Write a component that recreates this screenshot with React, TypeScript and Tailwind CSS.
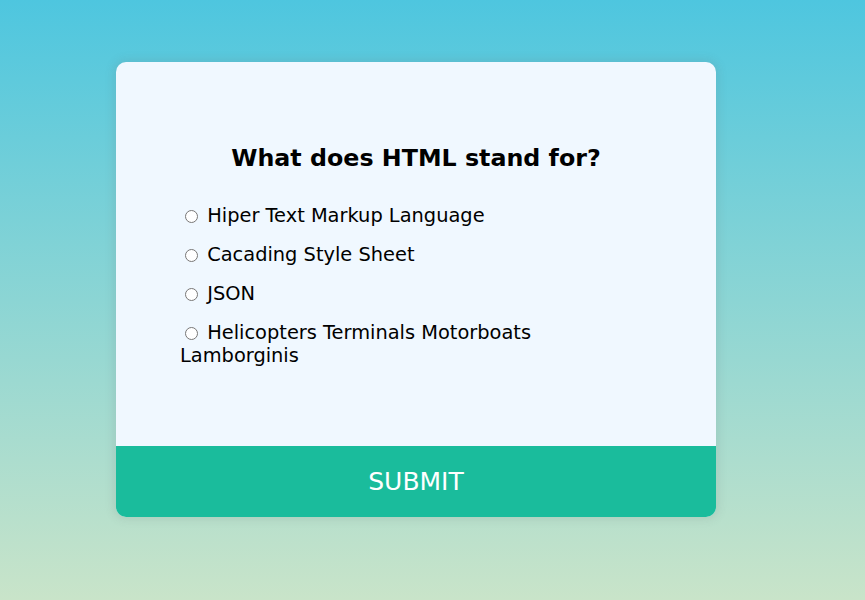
import React from "react";

const options = [
  "Hiper Text Markup Language",
  "Cacading Style Sheet",
  "JSON",
  "Helicopters Terminals Motorboats Lamborginis",
];

export default function App() {
  return (
    <div
      className="w-[865px] h-[600px] bg-[linear-gradient(to_bottom,#4ec6df,#c9e4c9)] pl-[116px] pt-[62px]"
      style={{ fontFamily: '"DejaVu Sans", sans-serif' }}
    >
      <div className="w-[600px] rounded-[10px] bg-[#f0f8ff] overflow-hidden shadow-[0_0_10px_2px_rgba(100,100,100,0.15)]">
        <div className="pt-16 px-16 pb-[63px]">
          <h2 className="pt-[18px] pb-4 px-4 text-center text-[23.75px] font-bold leading-[28px] text-black">
            What does HTML stand for?
          </h2>
          <ul className="list-none">
            {options.map((o, i) => (
              <li key={i} className="my-4 text-[19.4px] leading-[23px] text-black">
                <input
                  type="radio"
                  name="answer"
                  id={`a${i}`}
                  className="m-[3px_3px_0_5px] w-[13px] h-[13px] align-[-1px]"
                />{" "}
                <label htmlFor={`a${i}`}>{o}</label>
              </li>
            ))}
          </ul>
        </div>
        <button className="block w-full bg-[#1abc9c] text-white text-[25px] leading-[29px] py-[21px] text-center">
          SUBMIT
        </button>
      </div>
    </div>
  );
}
